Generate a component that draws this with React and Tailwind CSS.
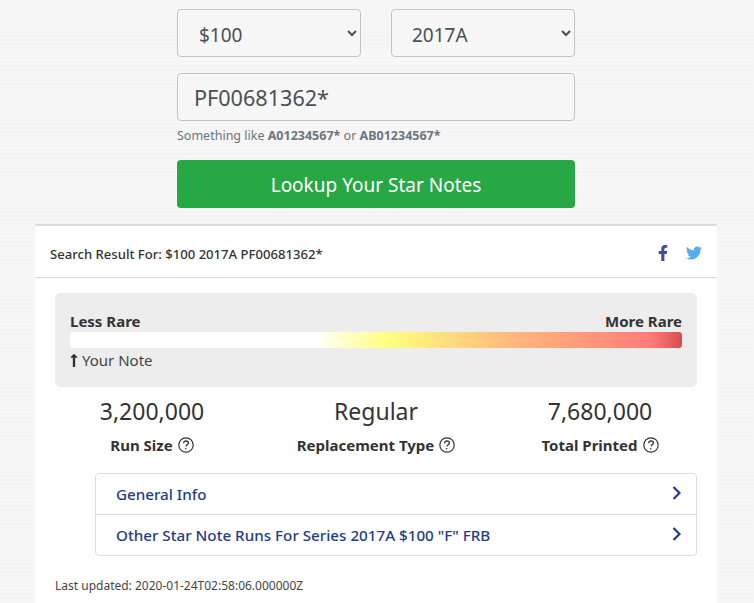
import React from "react";
import { FaFacebookF, FaTwitter, FaLongArrowAltUp } from "react-icons/fa";

function HelpIcon() {
  return (
    <svg viewBox="0 0 16 16" className="w-4 h-4 inline-block ml-[5px] align-[-2px]" fill="none" stroke="#333" strokeWidth="1.2">
      <circle cx="8" cy="8" r="7.2" />
      <path d="M5.6 6.2c0-1.4 1.1-2.2 2.4-2.2s2.4.8 2.4 2c0 1.7-2.3 1.8-2.3 3.5" strokeWidth="1.3" />
      <circle cx="7.7" cy="11.8" r="0.8" fill="#333" stroke="none" />
    </svg>
  );
}

function Stat({ value, label }) {
  return (
    <div className="text-center">
      <div className="text-[23px] leading-[27px] text-[#333]">{value}</div>
      <div className="mt-[9px] text-[15px] leading-[22px] font-bold text-[#333]">
        {label}
        <HelpIcon />
      </div>
    </div>
  );
}

function InfoRow({ text, last }) {
  return (
    <div className={`flex items-center justify-between pl-[20px] pr-[15px] ${last ? "h-[40px]" : "h-[41px] border-b border-[#ddd]"}`}>
      <span className="text-[15.2px] font-medium text-[#1f3c88]">{text}</span>
      <svg viewBox="0 0 9 14" className="w-[9px] h-[14px] mb-[3px]" fill="none" stroke="#1f3c88" strokeWidth="2.2">
        <path d="M1.5 1 L7.5 7 L1.5 13" />
      </svg>
    </div>
  );
}

export default function App() {
  return (
    <div className="w-[754px] h-[603px] overflow-hidden text-[#333] font-['Noto_Sans','Open_Sans',sans-serif] bg-[#f6f6f6] bg-[repeating-linear-gradient(0deg,#f3f3f3_0px,#f7f7f7_2px,#f5f5f5_5px,#f8f8f8_7px),repeating-linear-gradient(90deg,#f4f4f4_0px,#f7f7f7_3px,#f5f5f5_6px)] bg-[length:100%_11px,13px_100%]">
      <div className="w-[752px] pt-[9px]">
        <div className="w-[398px] mx-auto">
          <div className="flex justify-between">
            <select defaultValue="$100" className="w-[184px] h-[48px] pl-[17px] pr-[8px] pt-[4px] text-[19px] text-[#495057] bg-[#f7f7f7] border border-[#c4c4c4] rounded">
              <option>$100</option>
            </select>
            <select defaultValue="2017A" className="w-[184px] h-[48px] pl-[16px] pr-[8px] pt-[4px] text-[19px] text-[#495057] bg-[#f7f7f7] border border-[#c4c4c4] rounded">
              <option>2017A</option>
            </select>
          </div>
          <input
            readOnly
            value="PF00681362*"
            className="mt-[16px] block w-full h-[48px] px-[16px] text-[21.6px] text-[#495057] bg-[#f7f7f7] border border-[#c4c4c4] rounded"
          />
          <p className="mt-[6px] text-[12.5px] leading-[18px] text-[#6c757d]">
            Something like <b>A01234567*</b> or <b>AB01234567*</b>
          </p>
          <button className="mt-[15px] block w-full h-[48px] pt-[2px] bg-[#28a745] rounded text-white text-[19px]">
            Lookup Your Star Notes
          </button>
        </div>

        <div className="mt-[16px] ml-[35px] w-[682px] bg-white border-t-2 border-[#ddd] h-[400px]">
          <div className="flex items-center justify-between h-[52px] pt-[5px] px-[15px] border-b border-[#ddd]">
            <span className="text-[13.1px] font-medium pt-[1px]">Search Result For: $100 2017A PF00681362*</span>
            <div className="flex items-center gap-[18px] mb-[2px]">
              <FaFacebookF className="w-[10px] h-[16px] text-[#3f4f96]" />
              <FaTwitter className="w-[16px] h-[16px] text-[#55acee]" />
            </div>
          </div>

          <div className="px-[20px] pt-[15px]">
            <div className="h-[94px] bg-[#ededed] rounded-[5px] px-[15px] pt-[17px]">
              <div className="flex justify-between text-[15px] leading-[22px] font-bold">
                <span>Less Rare</span>
                <span>More Rare</span>
              </div>
              <div className="h-[16px] rounded-[3px] bg-[linear-gradient(90deg,#fff_0%,#fff_40%,#ffff80_52%,#ffb97d_72%,#ff7b7b_95%,#d94c4c_100%)]" />
              <div className="flex items-center mt-[1px] text-[15px] leading-[22px] text-[#444]">
                <FaLongArrowAltUp className="w-[8px] h-[15px] mr-[4px] text-[#333]" />
                Your Note
              </div>
            </div>

            <div className="mt-[11px] -mx-[15px] grid grid-cols-3">
              <Stat value="3,200,000" label="Run Size" />
              <Stat value="Regular" label="Replacement Type" />
              <Stat value="7,680,000" label="Total Printed" />
            </div>

            <div className="mt-[17px] ml-[40px] border border-[#ddd] rounded">
              <InfoRow text="General Info" />
              <InfoRow text={'Other Star Note Runs For Series 2017A $100 "F" FRB'} last />
            </div>

            <p className="mt-[21px] text-[12px] leading-[18px] text-[#444]">Last updated: 2020-01-24T02:58:06.000000Z</p>
          </div>
        </div>
      </div>
    </div>
  );
}
